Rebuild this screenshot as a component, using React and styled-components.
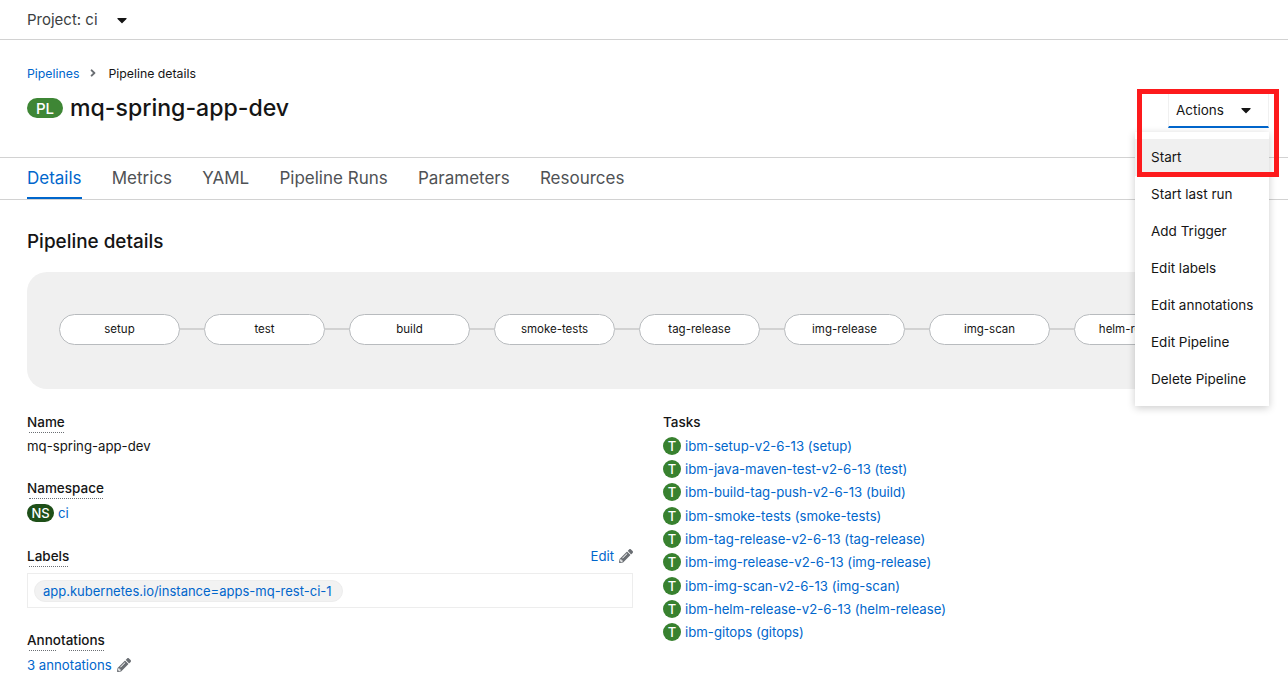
import React from 'react';
import styled, { createGlobalStyle } from 'styled-components';
import { FaCaretDown, FaAngleRight, FaPencilAlt } from 'react-icons/fa';

const nodes = ['setup', 'test', 'build', 'smoke-tests', 'tag-release', 'img-release', 'img-scan', 'helm-release'];

const tabs = ['Details', 'Metrics', 'YAML', 'Pipeline Runs', 'Parameters', 'Resources'];

const tasks = [
  'ibm-setup-v2-6-13 (setup)',
  'ibm-java-maven-test-v2-6-13 (test)',
  'ibm-build-tag-push-v2-6-13 (build)',
  'ibm-smoke-tests (smoke-tests)',
  'ibm-tag-release-v2-6-13 (tag-release)',
  'ibm-img-release-v2-6-13 (img-release)',
  'ibm-img-scan-v2-6-13 (img-scan)',
  'ibm-helm-release-v2-6-13 (helm-release)',
  'ibm-gitops (gitops)',
];

const menuItems = ['Start', 'Start last run', 'Add Trigger', 'Edit labels', 'Edit annotations', 'Edit Pipeline', 'Delete Pipeline'];

const GlobalStyle = createGlobalStyle`
  html, body {
    margin: 0;
    height: 100%;
    overflow: hidden;
    background: #fff;
  }
  body {
    font-family: Inter, "Liberation Sans", sans-serif;
    font-size: 14px;
    color: #151515;
  }
`;

const Page = styled.div`
  position: relative;
  width: 1288px;
  height: 673px;
  overflow: hidden;
`;

const TopBar = styled.div`
  display: flex;
  align-items: center;
  height: 39px;
  padding-left: 27px;
  border-bottom: 1px solid #d2d2d2;
  font-size: 15px;
  color: #3c3f42;
`;

const ProjectCaret = styled.span`
  display: flex;
  margin-left: 16px;
  color: #151515;
`;

const Header = styled.div`
  position: relative;
  display: flex;
  justify-content: space-between;
  height: 117px;
  padding: 0 19px 0 27px;
  border-bottom: 1px solid #d2d2d2;
`;

const Breadcrumb = styled.div`
  display: flex;
  align-items: center;
  height: 18px;
  margin-top: 24px;
  font-size: 12.3px;
`;

const Link = styled.a`
  color: #06c;
  text-decoration: none;
`;

const CrumbSep = styled.span`
  display: flex;
  margin: 0 9px 0 8px;
  color: #6a6e73;
`;

const TitleRow = styled.div`
  display: flex;
  align-items: center;
  gap: 7px;
  margin-top: 9px;
`;

const Title = styled.h1`
  margin: 0;
  font-size: 23.1px;
  font-weight: 500;
  line-height: 34px;
`;

const Badge = styled.span`
  display: inline-flex;
  align-items: center;
  justify-content: center;
  flex: none;
  width: ${(p) => p.$width}px;
  height: ${(p) => p.$height}px;
  border-radius: 20px;
  background: ${(p) => p.$bg};
  color: #fff;
  font-size: ${(p) => p.$size}px;
  font-weight: 500;
`;

const ActionsButton = styled.button`
  display: flex;
  align-items: center;
  justify-content: space-between;
  box-sizing: border-box;
  width: 101px;
  height: 37px;
  margin-top: 51px;
  padding: 3px 14px 0 7px;
  border: 0;
  border-left: 1px solid #f0f0f0;
  border-right: 1px solid #f0f0f0;
  border-bottom: 2px solid #06c;
  background: #fff;
  color: #151515;
  font: inherit;
  font-size: 13.5px;
`;

const Menu = styled.ul`
  position: absolute;
  top: 92px;
  right: 19px;
  z-index: 2;
  width: 134px;
  margin: 0;
  padding: 7px 0 8px;
  list-style: none;
  background: #fff;
  box-shadow: 0 2px 8px rgba(3, 3, 3, 0.2);
`;

const MenuItem = styled.li`
  display: flex;
  align-items: center;
  box-sizing: border-box;
  height: 37px;
  padding: 0 0 2px 16px;
  font-size: 13.5px;
  white-space: nowrap;
  background: ${(p) => (p.$active ? '#f0f0f0' : '#fff')};
`;

const Highlight = styled.div`
  position: absolute;
  top: 89px;
  left: 1137px;
  z-index: 3;
  box-sizing: border-box;
  width: 142px;
  height: 88px;
  border: 5px solid #fd1a1c;
`;

const TabBar = styled.div`
  display: flex;
  gap: 30.2px;
  height: 41px;
  padding-left: 27px;
  border-bottom: 1px solid #d2d2d2;
`;

const Tab = styled.div`
  display: flex;
  align-items: center;
  height: 39px;
  font-size: 17px;
  color: ${(p) => (p.$active ? '#06c' : '#4f5255')};
  border-bottom: 2px solid ${(p) => (p.$active ? '#06c' : 'transparent')};
`;

const Content = styled.div`
  padding: 0 27px;
`;

const SectionTitle = styled.h2`
  margin: 27px 0 16px;
  font-size: 18.9px;
  font-weight: 500;
  line-height: 29px;
`;

const Topology = styled.div`
  display: flex;
  align-items: center;
  height: 117px;
  padding: 0 0 3px 32px;
  box-sizing: border-box;
  overflow: hidden;
  border-radius: 20px;
  background: #f0f0f0;
`;

const Node = styled.div`
  display: flex;
  align-items: center;
  justify-content: center;
  flex: none;
  box-sizing: border-box;
  width: 121px;
  height: 31px;
  border: 1px solid #b8bbbe;
  border-radius: 16px;
  background: #fff;
  font-size: 11.5px;
`;

const Connector = styled.div`
  flex: none;
  width: 24px;
  height: 2px;
  background: #d2d2d2;
`;

const Columns = styled.div`
  display: grid;
  grid-template-columns: 606px 1fr;
  gap: 30px;
  margin-top: 24px;
`;

const Field = styled.div`
  margin-bottom: ${(p) => p.$gap ?? 24}px;
`;

const FieldHead = styled.div`
  display: flex;
  align-items: center;
  justify-content: space-between;
  height: 18px;
`;

const Term = styled.span`
  position: relative;
  display: inline-block;
  font-size: 13.5px;
  font-weight: 500;
  line-height: 18px;

  &::after {
    content: '';
    position: absolute;
    left: 2px;
    right: 1px;
    bottom: -2px;
    border-bottom: 1px dotted #6a6e73;
  }
`;

const PlainTerm = styled.strong`
  font-size: 13.5px;
  font-weight: 500;
  line-height: 18px;
`;

const TermGap = styled.span`
  position: absolute;
  left: 30px;
  bottom: -3px;
  z-index: 1;
  width: 11px;
  height: 3px;
  background: #fff;
`;

const Value = styled.div`
  display: flex;
  align-items: center;
  gap: 4px;
  margin-top: ${(p) => p.$top ?? 6}px;
  min-height: ${(p) => p.$height || 18}px;
  font-size: 13.2px;
`;

const EditLink = styled(Link)`
  display: inline-flex;
  align-items: center;
  gap: 5px;
  font-size: 13.2px;
`;

const Pencil = styled(FaPencilAlt)`
  color: #6a6e73;
  font-size: 14px;
`;

const LabelBox = styled.div`
  display: flex;
  align-items: center;
  height: 33px;
  margin-top: 8px;
  padding-left: 6px;
  border: 1px solid #ededed;
`;

const LabelChip = styled(Link)`
  padding: 2px 10px 2px 8px;
  border-radius: 12px;
  border: 1px solid #ededed;
  background: #f2f2f2;
  font-size: 13px;
`;

const TaskList = styled.div`
  margin-top: 3px;
`;

const TaskRow = styled.div`
  display: flex;
  align-items: center;
  gap: 4px;
  height: 23.33px;
  font-size: 13.2px;
`;

const TaskIcon = styled.span`
  display: flex;
  align-items: center;
  justify-content: center;
  flex: none;
  width: 18px;
  height: 18px;
  border-radius: 50%;
  background: #38812f;
  color: #fff;
  font-size: 13px;
  font-weight: 500;
`;

const App = () => {
  return (
    <Page>
      <GlobalStyle />
      <TopBar>
        Project: ci
        <ProjectCaret><FaCaretDown size={16} /></ProjectCaret>
      </TopBar>
      <Header>
        <div>
          <Breadcrumb>
            <Link>Pipelines</Link>
            <CrumbSep><FaAngleRight size={12} /></CrumbSep>
            Pipeline details
          </Breadcrumb>
          <TitleRow>
            <Badge $bg="#3e8635" $width={36} $height={20} $size={15}>PL</Badge>
            <Title>mq-spring-app-dev</Title>
          </TitleRow>
        </div>
        <ActionsButton>
          Actions
          <FaCaretDown size={16} />
        </ActionsButton>
        <Menu>
          {menuItems.map((item, index) => (
            <MenuItem key={item} $active={index === 0}>{item}</MenuItem>
          ))}
        </Menu>
      </Header>
      <TabBar>
        {tabs.map((tab, index) => (
          <Tab key={tab} $active={index === 0}>{tab}</Tab>
        ))}
      </TabBar>
      <Content>
        <SectionTitle>Pipeline details</SectionTitle>
        <Topology>
          {nodes.map((node, index) => (
            <React.Fragment key={node}>
              {index > 0 && <Connector />}
              <Node>{node}</Node>
            </React.Fragment>
          ))}
        </Topology>
        <Columns>
          <div>
            <Field>
              <FieldHead><Term>Name</Term></FieldHead>
              <Value>mq-spring-app-dev</Value>
            </Field>
            <Field>
              <FieldHead><Term>Namespace</Term></FieldHead>
              <Value $height={20}>
                <Badge $bg="#1e4f18" $width={27} $height={18} $size={13}>NS</Badge>
                <Link>ci</Link>
              </Value>
            </Field>
            <Field $gap={23}>
              <FieldHead>
                <Term>Labels</Term>
                <EditLink>Edit <Pencil /></EditLink>
              </FieldHead>
              <LabelBox>
                <LabelChip>app.kubernetes.io/instance=apps-mq-rest-ci-1</LabelChip>
              </LabelBox>
            </Field>
            <Field>
              <FieldHead><Term>Annotations<TermGap /></Term></FieldHead>
              <Value $top={7}>
                <EditLink>3 annotations <Pencil /></EditLink>
              </Value>
            </Field>
          </div>
          <div>
            <FieldHead><PlainTerm>Tasks</PlainTerm></FieldHead>
            <TaskList>
              {tasks.map((task) => (
                <TaskRow key={task}>
                  <TaskIcon>T</TaskIcon>
                  <Link>{task}</Link>
                </TaskRow>
              ))}
            </TaskList>
          </div>
        </Columns>
      </Content>
      <Highlight />
    </Page>
  );
};

export default App;
